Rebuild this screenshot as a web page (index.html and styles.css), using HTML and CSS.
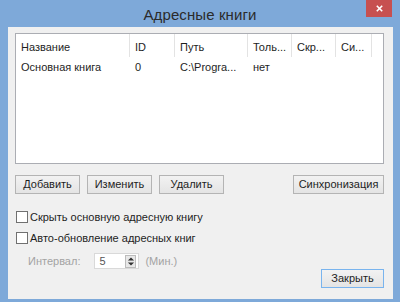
FILE: index.html
```html
<!DOCTYPE html>
<html lang="ru">
  <head>
    <meta charset="UTF-8" />
    <title>Адресные книги</title>
    <link rel="stylesheet" href="styles.css">
  </head>
  <body>
    <div class="window">
      <!-- ===== TITLE BAR ===== -->
      <header class="titlebar">
        <span></span>
        <h1>Адресные книги</h1>
        <button class="close" aria-label="close">
          <svg viewBox="0 0 10 10"><path d="M2 2l6 6M8 2l-6 6"/></svg>
        </button>
      </header>

      <!-- ===== CLIENT ===== -->
      <main class="client">
        <div class="list">
          <div class="row head">
            <span>Название</span><span>ID</span><span>Путь</span><span>Толь...</span><span>Скр...</span><span>Си...</span>
          </div>
          <div class="row">
            <span>Основная книга</span><span>0</span><span>C:\Progra...</span><span>нет</span><span></span><span></span>
          </div>
        </div>

        <div class="btn-row">
          <button class="btn">Добавить</button>
          <button class="btn">Изменить</button>
          <button class="btn">Удалить</button>
          <button class="btn sync">Синхронизация</button>
        </div>

        <label class="check first"><span class="box"></span>Скрыть основную адресную книгу</label>
        <label class="check"><span class="box"></span>Авто-обновление адресных книг</label>

        <div class="interval">
          <span class="dim">Интервал:</span>
          <div class="spin">
            <span>5</span>
            <span class="arrows">
              <svg viewBox="0 0 9 12"><path d="M4.5 1.5L8 5H1zM4.5 10.5L1 7h7z"/></svg>
            </span>
          </div>
          <span class="dim">(Мин.)</span>
        </div>

        <div class="foot">
          <button class="btn default">Закрыть</button>
        </div>
      </main>
    </div>
  </body>
</html>
```

FILE: styles.css
```css
:root{
  /* palette */
  --c-frame:#7ea9d9;
  --c-client:#f0f0f0;
  --c-line:#e3e3e3;
  --c-border:#abadb3;
  --c-dim:#a3a3a3;
}
*,*::before,*::after{box-sizing:border-box;margin:0;padding:0}
html,body{width:400px;height:302px;overflow:hidden;background:var(--c-frame);font-family:"Liberation Sans",Arial,sans-serif;font-size:11px;color:#1e1e1e}
button{font:inherit;color:inherit}

/* ===== WINDOW ===== */
.window{height:302px;display:flex;flex-direction:column;padding:0 7px 6px 8px}

.titlebar{height:27px;display:grid;grid-template-columns:1fr auto 1fr;align-items:start;margin:0 -7px 0 -8px}
.titlebar h1{font-weight:400;font-size:15px;color:#2b2b2b;line-height:30px;letter-spacing:.1px}
.close{justify-self:end;width:26px;height:17px;margin-right:8px;background:#c75050;border:none;display:grid;place-items:center}
.close svg{width:9px;height:9px;stroke:#fff;stroke-width:1.8;fill:none}

.client{flex:1;background:var(--c-client);padding:6px 9px 0 7px;display:flex;flex-direction:column}

/* list view */
.list{height:131px;background:#fff;border:1px solid var(--c-border)}
.row{display:grid;grid-template-columns:114px 45px 73px 44px 44px 36px}
.row span{padding-left:5px;white-space:nowrap;overflow:hidden}
.head{height:23px;align-items:center}
.head span{border-right:1px solid var(--c-line);height:100%;line-height:26px}
.row:not(.head){height:19px;line-height:20px}

/* buttons */
.btn-row{display:flex;gap:7px;margin-top:11px}
.btn{height:19px;width:65px;background:linear-gradient(#f2f2f2,#e4e4e4);border:1px solid #b4b4b4;line-height:17px}
.btn.sync{width:91px;margin-left:auto}

/* checks */
.check{display:flex;align-items:center;height:13px;gap:2px}
.check.first{margin-top:16px}
.check + .check{margin-top:8px}
.box{width:12px;height:12px;margin-left:1px;background:#fff;border:1px solid #707070}

/* interval */
.interval{display:flex;align-items:center;margin:9px 0 0 13px;height:16px}
.dim{color:var(--c-dim)}
.spin{width:45px;height:16px;margin:0 6px 0 14px;background:#fff;border:1px solid #d9d9d9;display:flex;align-items:center;justify-content:space-between;padding:0 2px 0 4px;color:#555}
.arrows{width:11px;height:13px;background:#e8e8e8;border:1px solid #bcbcbc;display:grid;place-items:center}
.arrows svg{width:8px;height:11px;fill:#333}

.foot{display:flex;justify-content:flex-end;margin-top:auto;padding-bottom:11px}
.btn.default{width:63px;height:19px;border-color:#79b4ee}
```
